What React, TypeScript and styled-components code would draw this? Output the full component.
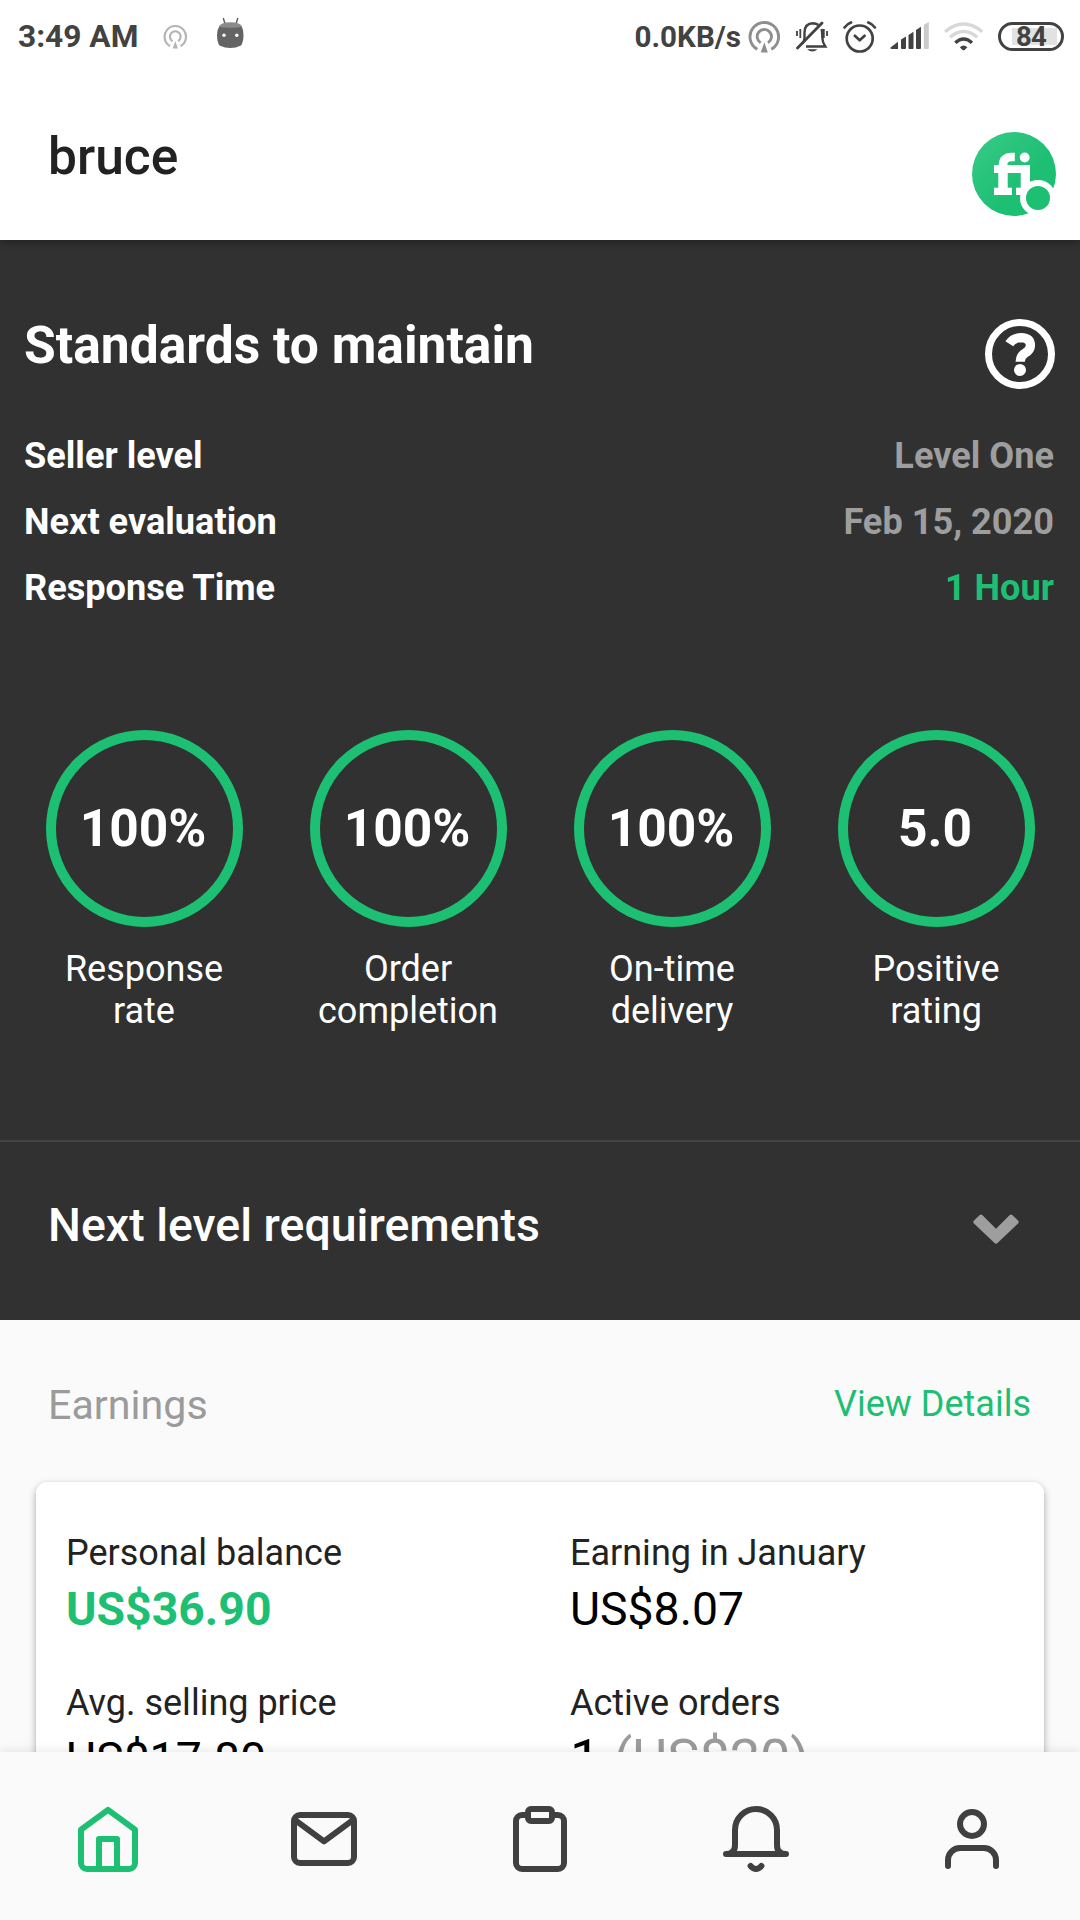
import React from "react";
import styled, { createGlobalStyle } from "styled-components";

const GREEN = "#1dbf73";
const DARK = "#313131";
const STATUS = "#424242";

const GlobalStyle = createGlobalStyle`
  *, *::before, *::after { box-sizing: border-box; }
  body {
    margin: 0;
    background: #fafafa;
    font-family: Roboto, "Liberation Sans", sans-serif;
    overflow: hidden;
  }
  svg { display: block; flex: none; }
`;

const Screen = styled.div`
  width: 1080px;
  height: 1920px;
  display: flex;
  flex-direction: column;
  overflow: hidden;
  background: #fafafa;
`;

const Header = styled.header`
  position: relative;
  z-index: 2;
  flex: none;
  height: 240px;
  background: #fff;
  box-shadow: 0 3px 8px rgba(0, 0, 0, 0.3);
`;

const StatusBar = styled.div`
  height: 74px;
  display: flex;
  align-items: center;
  justify-content: space-between;
  padding: 0 16px 0 18px;
  color: ${STATUS};
`;

const StatusGroup = styled.div`
  display: flex;
  align-items: center;
`;

const StatusText = styled.span<{ $size: number; $gap: number }>`
  font-size: ${(p) => p.$size}px;
  font-weight: 700;
  line-height: 74px;
  margin-right: ${(p) => p.$gap}px;
  white-space: nowrap;
`;

const StatusIcon = styled.svg<{ $gap?: number }>`
  height: 74px;
  margin-right: ${(p) => p.$gap ?? 0}px;
`;

const AppBar = styled.div`
  height: 166px;
  display: flex;
  align-items: flex-start;
  justify-content: space-between;
  padding: 53px 24px 0 48px;
`;

const UserName = styled.h1`
  margin: 0;
  font-size: 51.5px;
  line-height: 60px;
  font-weight: 500;
  color: #222;
`;

const Avatar = styled.div`
  margin-top: 5px;
`;

const Content = styled.main`
  flex: 1;
  min-height: 0;
  overflow: hidden;
`;

const Standards = styled.section`
  height: 900px;
  padding-top: 76px;
  background: ${DARK};
  color: #fff;
`;

const StandardsHead = styled.div`
  height: 107px;
  padding: 0 25px 0 24px;
  display: flex;
  justify-content: space-between;
  align-items: flex-start;
`;

const StandardsTitle = styled.h2`
  margin: 0;
  font-size: 51.55px;
  line-height: 60px;
  font-weight: 700;
`;

const HelpButton = styled.button`
  margin: 3px 0 0;
  padding: 0;
  border: 0;
  background: none;
`;

const FactRow = styled.div`
  height: 66px;
  padding: 0 26px 0 24px;
  display: flex;
  justify-content: space-between;
  font-size: 36.15px;
  line-height: 66px;
  font-weight: 700;
`;

const FactValue = styled.span<{ $accent?: boolean }>`
  color: ${(p) => (p.$accent ? GREEN : "#9e9e9e")};
`;

const Gauges = styled.div`
  padding: 109px 12px 0;
  display: grid;
  grid-template-columns: repeat(4, 264px);
`;

const Gauge = styled.div`
  display: flex;
  flex-direction: column;
  align-items: center;
`;

const Ring = styled.div`
  width: 197px;
  height: 197px;
  padding: 1px 2px 0 0;
  border: 10px solid ${GREEN};
  border-radius: 50%;
  display: flex;
  align-items: center;
  justify-content: center;
  font-size: 51.5px;
  line-height: 60px;
  font-weight: 700;
`;

const GaugeLabel = styled.div`
  width: 200px;
  margin-top: 21px;
  text-align: center;
  font-size: 36px;
  line-height: 42px;
`;

const NextLevel = styled.section`
  height: 180px;
  padding: 56px 61px 0 48px;
  border-top: 2px solid #434343;
  background: ${DARK};
  color: #fff;
  display: flex;
  justify-content: space-between;
  align-items: flex-start;
`;

const NextLevelTitle = styled.h3`
  margin: 0;
  font-size: 46.45px;
  line-height: 54px;
  font-weight: 500;
`;

const Chevron = styled.svg`
  margin-top: 16px;
`;

const EarningsHead = styled.div`
  height: 162px;
  padding: 60px 49px 0 48px;
  display: flex;
  justify-content: space-between;
  align-items: flex-start;
`;

const EarningsTitle = styled.h3`
  margin: 0;
  font-size: 41.2px;
  line-height: 51px;
  font-weight: 400;
  color: #9b9b9b;
`;

const DetailsLink = styled.a`
  font-size: 36px;
  line-height: 48px;
  color: ${GREEN};
`;

const Card = styled.section`
  height: 400px;
  margin: 0 36px;
  padding: 50px 0 0 30px;
  border-radius: 11px;
  background: #fff;
  box-shadow: 0 4px 8px rgba(0, 0, 0, 0.3), 0 0 3px rgba(0, 0, 0, 0.08);
  display: grid;
  grid-template-columns: 504px 1fr;
  grid-auto-rows: 150px;
`;

const MetricLabel = styled.div`
  font-size: 36px;
  line-height: 42px;
  color: #222;
`;

const MetricValue = styled.div<{ $accent?: boolean; $size?: number }>`
  margin-top: 8px;
  font-size: ${(p) => p.$size ?? 46.35}px;
  line-height: 54px;
  font-weight: ${(p) => (p.$accent ? 700 : 400)};
  color: ${(p) => (p.$accent ? GREEN : "#000")};
`;

const Muted = styled.span`
  color: #9b9b9b;
`;

const TabBar = styled.nav`
  position: relative;
  z-index: 2;
  flex: none;
  height: 168px;
  padding-top: 51px;
  display: grid;
  grid-template-columns: repeat(5, 1fr);
  justify-items: center;
  background: #fafafa;
  box-shadow: 0 -1px 10px rgba(0, 0, 0, 0.1);
`;

const TabIcon = styled.svg<{ $active?: boolean }>`
  width: 72px;
  height: 72px;
  fill: none;
  stroke: ${(p) => (p.$active ? GREEN : "#404040")};
  stroke-width: 2;
  stroke-linecap: round;
  stroke-linejoin: round;
`;

const Battery = styled.div`
  width: 66px;
  height: 29px;
  margin-bottom: 2px;
  padding-top: 1px;
  border: 3px solid ${STATUS};
  border-radius: 15px;
  background: linear-gradient(#e2e2e2, #e2e2e2) 11px center / 45px 17px no-repeat;
  display: flex;
  align-items: center;
  justify-content: center;
  font-size: 27.5px;
  letter-spacing: -0.8px;
  line-height: 27px;
  font-weight: 700;
`;

interface HotspotProps {
  left: number;
  width: number;
  cx: number;
  cy: number;
  r: number;
  color: string;
}

function HotspotIcon({ left, width, cx, cy, r, color }: HotspotProps) {
  return (
    <StatusIcon width={width} viewBox={`${left} 0 ${width} 74`} fill="none">
      <g transform={`translate(${cx} ${cy}) scale(${r / 14})`} stroke={color} strokeWidth="2.8">
        <path d="M-6.8 12.3a14 14 0 1 1 13.6 0" />
        <path d="M-3.6 5.9a7 7 0 1 1 7.2 0" />
        <path d="M0 5.500L3.500 15.500H-3.500Z" fill={color} stroke="none" />
      </g>
    </StatusIcon>
  );
}

function RobotIcon() {
  return (
    <StatusIcon width="28" viewBox="217 0 28 74">
      <path d="M223.3 18l2 7M237.800 18l-2 7" stroke="#5c5c5c" strokeWidth="1.4" />
      <path d="M219.500 26q11-5.500 22 0 2 3.500 2 9 0 7-2.500 10.500-10.500 5-21.500 0-2.500-3.500-2.500-10.500 0-5.500 2.500-9z" fill="#646464" />
      <path d="M218.700 27q1.500-4.700 11.800-4.700t11.700 4.700q-11.700 1.500-23.500 0z" fill="#8b8b8b" />
      <circle cx="224" cy="35.300" r="1.700" fill="#fff" />
      <circle cx="236.800" cy="35.300" r="1.700" fill="#fff" />
    </StatusIcon>
  );
}

function SilentIcon() {
  return (
    <StatusIcon $gap={15} width="32" viewBox="796 0 32 74" fill="none" stroke={STATUS} strokeWidth="2.4">
      <path d="M802.500 43.500q2-2 2-6v-5q0-9 8.500-9.300 3 0 5.500 1.800M821.500 29q.8 2.500.8 8.500 0 4.500 3 9H806" />
      <path d="M797.500 48L822 23" strokeWidth="2.8" strokeLinecap="round" />
      <path d="M807 49.300h10.500q-5 4.500-10.500 0z" fill={STATUS} stroke="none" />
      <path d="M797 31v5M800.300 29v9M827 31v5M823.800 29v9" strokeWidth="1.8" />
    </StatusIcon>
  );
}

function AlarmIcon() {
  return (
    <StatusIcon $gap={13} width="34" viewBox="843 0 34 74" fill="none" stroke={STATUS} strokeWidth="2.7" strokeLinecap="round" strokeLinejoin="round">
      <circle cx="859.700" cy="38.500" r="13" />
      <path d="M854.800 35.800l4.900 4.500 4.900-4.500" />
      <path d="M844.500 27.500q2.500-3.500 6.500-5M874.900 27.500q-2.500-3.500-6.500-5" />
    </StatusIcon>
  );
}

function SignalIcon() {
  return (
    <StatusIcon $gap={14} width="40" viewBox="890 0 40 74" fill={STATUS}>
      <path d="M890.500 47.500l7.500-5.800v7.300h-6.500q-1.500-.5-1-1.500z" />
      <path d="M901 39.600l5-3V48q0 1-1 1h-3q-1 0-1-1z" />
      <path d="M908.500 35l5-3.200V48q0 1-1 1h-3q-1 0-1-1z" />
      <path d="M916 30l5-3.200V48q0 1-1 1h-3q-1 0-1-1z" />
      <path d="M923.800 25l5-3.200V48q0 1-1 1h-3q-1 0-1-1z" fill="#cbcbcb" />
    </StatusIcon>
  );
}

function WifiIcon() {
  return (
    <StatusIcon $gap={14} width="40" viewBox="944 0 40 74" fill="none" strokeWidth="3.4">
      <path d="M945 31.800q18.600-15.500 37.300 0" stroke="#d8d8d8" />
      <path d="M950 37.300q13.600-11.500 27.200 0" stroke="#d8d8d8" />
      <path d="M955.300 42.800q8.300-7.500 16.700 0" stroke={STATUS} />
      <path d="M959.800 47.300q3.800-3.400 7.600 0l-2.500 2.500q-1.300 1-2.600 0z" fill={STATUS} />
    </StatusIcon>
  );
}

function BrandAvatar() {
  return (
    <svg width="84" height="84" viewBox="0 0 84 84">
      <defs>
        <linearGradient id="brand" x1="0" y1="0" x2="1" y2="1">
          <stop offset="0.05" stopColor="#37c986" />
          <stop offset="0.6" stopColor={GREEN} />
        </linearGradient>
      </defs>
      <circle cx="42" cy="42" r="42" fill="url(#brand)" />
      <g fill="#fff">
        <rect x="22" y="33" width="36" height="8" />
        <rect x="26.300" y="34" width="9.400" height="26" />
        <rect x="48.700" y="34" width="9.300" height="26" />
        <rect x="22" y="55.700" width="18" height="7.300" />
        <rect x="44" y="55.700" width="18" height="7.300" />
        <circle cx="52.700" cy="25.500" r="4.900" />
      </g>
      <path d="M31 35v-1.500q0-8.500 8.500-8.500h3.300" fill="none" stroke="#fff" strokeWidth="8.600" />
      <circle cx="66" cy="66" r="18" fill="#fff" />
      <circle cx="66" cy="66" r="12" fill={GREEN} />
    </svg>
  );
}

function HelpIcon() {
  return (
    <svg width="70" height="70" viewBox="0 0 70 70" fill="none" stroke="#fff">
      <circle cx="35" cy="35" r="31.500" strokeWidth="7" />
      <path d="M24.300 24.800q4-6.100 11.700-6.100 9.400.3 9.400 7.800 0 4.500-5.200 7.500-5 3-5 8.800" strokeWidth="9.300" />
      <circle cx="35" cy="51" r="6" fill="#fff" stroke="none" />
    </svg>
  );
}

const facts = [
  { label: "Seller level", value: "Level One" },
  { label: "Next evaluation", value: "Feb 15, 2020" },
  { label: "Response Time", value: "1 Hour", accent: true },
];

const gauges = [
  { value: "100%", label: "Response rate" },
  { value: "100%", label: "Order completion" },
  { value: "100%", label: "On-time delivery" },
  { value: "5.0", label: "Positive rating" },
];

export default function App() {
  return (
    <>
      <GlobalStyle />
      <Screen>
        <Header>
          <StatusBar>
            <StatusGroup>
              <StatusText $size={31.7} $gap={25}>3:49 AM</StatusText>
              <HotspotIcon left={163} width={54} cx={175.3} cy={36.7} r={10.7} color="#b4b4b4" />
              <RobotIcon />
            </StatusGroup>
            <StatusGroup>
              <StatusText $size={29.6} $gap={7}>0.0KB/s</StatusText>
              <HotspotIcon left={748} width={48} cx={764.3} cy={36.7} r={14.3} color="#8e8e8e" />
              <SilentIcon />
              <AlarmIcon />
              <SignalIcon />
              <WifiIcon />
              <Battery>84</Battery>
            </StatusGroup>
          </StatusBar>
          <AppBar>
            <UserName>bruce</UserName>
            <Avatar><BrandAvatar /></Avatar>
          </AppBar>
        </Header>

        <Content>
          <Standards>
            <StandardsHead>
              <StandardsTitle>Standards to maintain</StandardsTitle>
              <HelpButton aria-label="Help"><HelpIcon /></HelpButton>
            </StandardsHead>
            {facts.map((f) => (
              <FactRow key={f.label}>
                <span>{f.label}</span>
                <FactValue $accent={f.accent}>{f.value}</FactValue>
              </FactRow>
            ))}
            <Gauges>
              {gauges.map((g) => (
                <Gauge key={g.label}>
                  <Ring>{g.value}</Ring>
                  <GaugeLabel>{g.label}</GaugeLabel>
                </Gauge>
              ))}
            </Gauges>
          </Standards>

          <NextLevel>
            <NextLevelTitle>Next level requirements</NextLevelTitle>
            <Chevron width="46" height="30" viewBox="0 0 46 30">
              <path d="M1 9.500Q-.5 8 1 6.500L6.500 1.200Q8-.3 9.500 1.200L23 14.700 36.500 1.200Q38-.3 39.500 1.200L45 6.500Q46.500 8 45 9.500L24.500 29Q23 30.500 21.500 29z" fill="#9e9e9e" />
            </Chevron>
          </NextLevel>

          <EarningsHead>
            <EarningsTitle>Earnings</EarningsTitle>
            <DetailsLink>View Details</DetailsLink>
          </EarningsHead>

          <Card>
            <div>
              <MetricLabel>Personal balance</MetricLabel>
              <MetricValue $accent>US$36.90</MetricValue>
            </div>
            <div>
              <MetricLabel>Earning in January</MetricLabel>
              <MetricValue>US$8.07</MetricValue>
            </div>
            <div>
              <MetricLabel>Avg. selling price</MetricLabel>
              <MetricValue>US$17.80</MetricValue>
            </div>
            <div>
              <MetricLabel>Active orders</MetricLabel>
              <MetricValue $size={54}>
                1 <Muted>(US$20)</Muted>
              </MetricValue>
            </div>
          </Card>
        </Content>

        <TabBar>
          <TabIcon viewBox="0 0 24 24" $active>
            <path d="M3 8.900L12 2.300l9 6.600V20a2 2 0 0 1-2 2H5a2 2 0 0 1-2-2z" />
            <path d="M9 22V12h6v10" />
          </TabIcon>
          <TabIcon viewBox="0 0 24 24">
            <rect x="2" y="4" width="20" height="16" rx="2" />
            <path d="M2.500 5.800L12 12.800l9.500-7" />
          </TabIcon>
          <TabIcon viewBox="0 0 24 24">
            <path d="M8 4H6a2 2 0 0 0-2 2v14a2 2 0 0 0 2 2h12a2 2 0 0 0 2-2V6a2 2 0 0 0-2-2h-2" />
            <rect x="8" y="2" width="8" height="4" rx="1" />
          </TabIcon>
          <TabIcon viewBox="0 0 24 24">
            <path d="M2 17q3 0 3-3V9a7 7 0 0 1 14 0v5q0 3 3 3z" />
            <path d="M10.200 21q1.800 2 3.600 0" />
          </TabIcon>
          <TabIcon viewBox="0 0 24 24">
            <circle cx="12" cy="7" r="4" />
            <path d="M4 21v-2a4 4 0 0 1 4-4h8a4 4 0 0 1 4 4v2" />
          </TabIcon>
        </TabBar>
      </Screen>
    </>
  );
}
